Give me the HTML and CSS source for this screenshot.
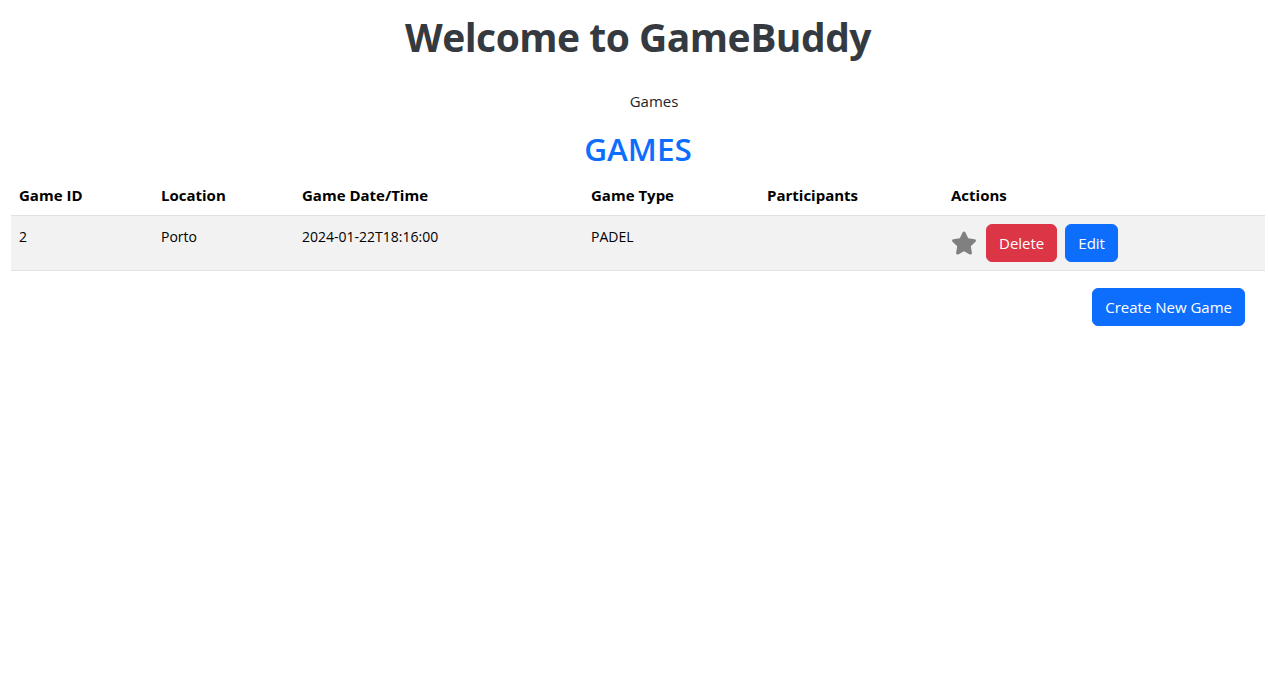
FILE: index.html
```html
<!DOCTYPE html>
<html lang="en">
<head>
<meta charset="utf-8">
<title>GameBuddy</title>
<link rel="stylesheet" href="styles.css">
</head>
<body>
<div class="page">
  <h1 class="title">Welcome to GameBuddy</h1>
  <ul class="nav">
    <li>Games</li>
  </ul>
  <h2 class="section-title">GAMES</h2>
  <table class="games">
    <thead>
      <tr>
        <th class="c-id">Game ID</th>
        <th class="c-loc">Location</th>
        <th class="c-date">Game Date/Time</th>
        <th class="c-type">Game Type</th>
        <th class="c-part">Participants</th>
        <th class="c-act">Actions</th>
      </tr>
    </thead>
    <tbody>
      <tr>
        <td>2</td>
        <td>Porto</td>
        <td>2024-01-22T18:16:00</td>
        <td>PADEL</td>
        <td></td>
        <td class="actions">
          <div class="actions-inner">
            <svg class="star" viewBox="0 0 576 512" width="26" height="24" aria-hidden="true"><path fill="#808080" d="M316.9 18C311.6 7 300.4 0 288.1 0s-23.4 7-28.8 18L195 150.3 51.4 171.5c-12 1.8-22 10.2-25.7 21.7s-.7 24.2 7.9 32.7L137.8 329 113.2 474.7c-2 12 3 24.2 12.9 31.3s23 8 33.800 2.3l128.3-68.5 128.3 68.5c10.8 5.7 23.9 4.9 33.8-2.3s14.9-19.3 12.9-31.3L438.5 329 542.7 225.9c8.6-8.5 11.7-21.2 7.9-32.7s-13.7-19.9-25.7-21.7L381.2 150.3 316.9 18z"/></svg>
            <button class="btn btn-danger">Delete</button>
            <button class="btn btn-primary">Edit</button>
          </div>
        </td>
      </tr>
    </tbody>
  </table>
  <div class="footer-actions">
    <button class="btn btn-primary">Create New Game</button>
  </div>
</div>
</body>
</html>
```

FILE: styles.css
```css
* { box-sizing: border-box; }
html, body { margin: 0; padding: 0; background: #fff; }
body {
  font-family: "Open Sans", "Noto Sans", sans-serif;
  font-size: 15px;
  color: #212529;
}
.page {
  margin: 0 3px 0 11px;
}
.title {
  margin: 0;
  padding-top: 14px;
  text-align: center;
  font-size: 39px;
  font-weight: 700;
  line-height: 1.2;
  color: #343a40;
  letter-spacing: -0.5px;
}
.nav {
  list-style: none;
  margin: 30px 0 0;
  padding: 0 0 0 32px;
  text-align: center;
  font-size: 15px;
  line-height: 21px;
}
.section-title {
  margin: 18px 0 0;
  text-align: center;
  font-size: 31.5px;
  font-weight: 600;
  line-height: 1.2;
  color: #0d6efd;
}
.games {
  width: 100%;
  border-collapse: collapse;
  margin-top: 13px;
  table-layout: fixed;
}
.c-id { width: 142px; }
.c-loc { width: 141px; }
.c-date { width: 289px; }
.c-type { width: 176px; }
.c-part { width: 184px; }
.games th {
  text-align: left;
  font-weight: 700;
  font-size: 15px;
  color: #000;
  padding: 4px 8px 10px;
  line-height: 20px;
  border-bottom: 1px solid #dee2e6;
}
.games td {
  vertical-align: top;
  padding: 9px 8px 7px;
  font-size: 14px;
  line-height: 24px;
  color: #000;
  background: #f2f2f2;
  border-bottom: 1px solid #dee2e6;
  height: 55px;
}
.games td.actions { padding: 8px; }
.actions-inner {
  display: flex;
  align-items: center;
  gap: 8px;
}
.star { display: block; margin-right: 1px; }
.btn {
  font-family: inherit;
  font-size: 15px;
  line-height: 24px;
  padding: 6px 12px;
  border: 1px solid transparent;
  border-radius: 6px;
  color: #fff;
  cursor: pointer;
}
.btn-danger { background: #dc3545; border-color: #dc3545; }
.btn-primary { background: #0d6efd; border-color: #0d6efd; }
.footer-actions {
  display: flex;
  justify-content: flex-end;
  padding-right: 20px;
  margin-top: 17px;
}
```
